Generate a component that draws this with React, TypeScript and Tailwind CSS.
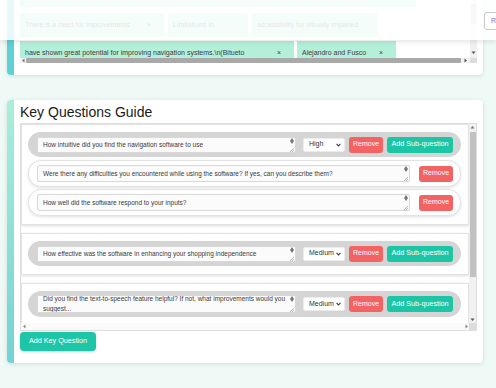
import React from 'react';

type Dir = 'up' | 'down' | 'left' | 'right';

function Tri({ d, c = '#6f6f6f' }: { d: Dir; c?: string }) {
  const pts = {
    up: '0.5,3.5 2.5,1 4.5,3.5',
    down: '0.5,1.5 2.5,4 4.5,1.5',
    left: '3.5,0.5 1,2.5 3.5,4.5',
    right: '1.5,0.5 4,2.5 1.5,4.5',
  }[d];
  return (
    <svg width="5" height="5" viewBox="0 0 5 5" className="shrink-0">
      <polygon points={pts} fill={c} />
    </svg>
  );
}

// fake textarea with its little spinner + resize grip
function Field({ children, className = '' }: { children: React.ReactNode; className?: string }) {
  return (
    <div className={`flex shrink-0 rounded-[2px] border border-[#d8d8d8] bg-[#fbfbfb] ${className}`}>
      <div className="flex-1 overflow-hidden pl-[5px] text-[6.5px] leading-[10px] text-[#3a3a3a]">{children}</div>
      <div className="flex w-[7px] flex-col items-center justify-between">
        <div className="flex flex-col items-center leading-none">
          <svg width="4" height="3" viewBox="0 0 4 3"><polygon points="0,3 2,0 4,3" fill="#777" /></svg>
          <svg width="4" height="3" viewBox="0 0 4 3"><polygon points="0,0 2,3 4,0" fill="#777" /></svg>
        </div>
        <svg width="5" height="5" viewBox="0 0 5 5">
          <path d="M1 5 L5 1 M3 5 L5 3" stroke="#9a9a9a" strokeWidth="0.7" />
        </svg>
      </div>
    </div>
  );
}

function Select({ value }: { value: string }) {
  return (
    <div className="ml-[7px] flex h-[14px] w-[42px] shrink-0 items-center justify-between rounded-[2px] border border-[#ececec] bg-white pl-[5px] pr-[3px] text-[7px] text-[#333]">
      <span>{value}</span>
      <svg width="5" height="4" viewBox="0 0 5 4"><path d="M0.6 0.8 L2.5 3 L4.4 0.8" stroke="#333" strokeWidth="1.1" fill="none" /></svg>
    </div>
  );
}

function RemoveBtn({ className = '' }: { className?: string }) {
  return (
    <button className={`flex h-[16px] w-[34px] shrink-0 items-center justify-center rounded-[3px] bg-[#f36363] text-[7px] text-white ${className}`}>
      Remove
    </button>
  );
}

function AddSubBtn() {
  return (
    <button className="ml-[4px] flex h-[16px] w-[66px] shrink-0 items-center justify-center rounded-[3px] bg-[#1cc5a6] text-[7.2px] text-white">
      Add Sub-question
    </button>
  );
}

function MainRow({ priority, h = 25, fieldH = 16, children }: { priority: string; h?: number; fieldH?: number; children: React.ReactNode }) {
  return (
    <div
      className="flex items-center rounded-[13px] bg-[#d5d5d5] pl-[9px] pr-[8px]"
      style={{ height: h }}
    >
      <Field className="w-[259px]">
        <div style={{ height: fieldH - 2 }} className="flex flex-col justify-center">{children}</div>
      </Field>
      <Select value={priority} />
      <RemoveBtn className="ml-[4px]" />
      <AddSubBtn />
    </div>
  );
}

function SubRow({ text }: { text: string }) {
  return (
    <div className="flex h-[27px] items-center rounded-[13px] border border-[#e3e3e3] bg-white pl-[8px] pr-[7px] shadow-[0_1px_3px_rgba(0,0,0,0.12)]">
      <Field className="w-[373px]">
        <div className="flex h-[15px] items-center whitespace-nowrap">{text}</div>
      </Field>
      <RemoveBtn className="ml-[9px]" />
    </div>
  );
}

function Group({ children }: { children: React.ReactNode }) {
  return (
    <div className="shrink-0 border border-[#e2e2e2] bg-white pb-[8px] pl-[6px] pr-[7px] pt-[7px] shadow-[0_1px_3px_rgba(0,0,0,0.14)]">
      {children}
    </div>
  );
}

function Chip({ w, text, x = true }: { w: number; text: string; x?: boolean }) {
  return (
    <div
      className="flex h-[24px] shrink-0 items-center whitespace-nowrap bg-[#b4efda] pl-[5px] pr-[13px] text-[7px] text-[#3d3d3d]"
      style={{ width: w }}
    >
      <span>{text}</span>
      {x && <span className="ml-auto pl-[4px] text-[7px]">×</span>}
    </div>
  );
}

export default function App() {
  return (
    <div className="relative h-[388px] w-full overflow-hidden bg-[#effaf6] font-[Liberation_Sans,Arial,sans-serif]">
      {/* sticky top toolbar over the page */}
      <div className="absolute inset-x-0 top-0 z-10 h-[40px] bg-white/[0.86] shadow-[0_2px_5px_rgba(0,0,0,0.10)]">
        <button className="absolute left-[484px] top-[12px] h-[18px] whitespace-nowrap rounded-[3px] border border-[#c8c8c8] bg-white px-[6px] text-[7px] text-[#8a6cc8]">
          R
        </button>
      </div>

      <div className="ml-[7px] flex w-[476px] flex-col gap-[25px]">
        {/* references card (scrolled, mostly under toolbar) */}
        <div className="flex h-[75px] rounded-b-[4px] bg-white shadow-[0_1px_4px_rgba(0,0,0,0.12)]">
          <div className="w-[7px] rounded-bl-[4px] bg-[#5fd0d4]" />
          <div className="flex flex-1 flex-col px-[6px] pb-[12px]">
            <div className="flex h-[58px]">
              <div className="flex-1 overflow-hidden">
                <div className="-mt-[17px] flex flex-col">
                  <div className="flex h-[24px] shrink-0">
                    <div className="h-[24px] w-[396px] bg-[#b8f0dc]" />
                  </div>
                  <div className="mt-[6px] flex gap-[4px]">
                    <Chip w={144} text="There is a need for improvements" />
                    <Chip w={80} text="Limitations in" x={false} />
                    <Chip w={126} text="accessibility for visually impaired" x={false} />
                  </div>
                  <div className="mt-[4px] flex gap-[3px]">
                    <Chip w={274} text="have shown great potential for improving navigation systems.\n(Bitueto" />
                    <Chip w={99} text="Alejandro and Fusco" />
                  </div>
                </div>
              </div>
              <div className="flex w-[7px] flex-col items-center justify-between bg-[#f1f1f1] pb-[3px]">
                <div className="mt-[4px] h-[20px] w-[5px] rounded-[1px] bg-[#c3c3c3]" />
                <Tri d="down" c="#555" />
              </div>
            </div>
            <div className="flex h-[5px] items-center bg-[#f1f1f1]">
              <div className="flex w-[6px] justify-center"><Tri d="left" c="#777" /></div>
              <div className="h-[5px] w-[435px] rounded-[1px] bg-[#a9a9a9]" />
              <div className="flex flex-1 justify-center"><Tri d="right" c="#555" /></div>
              <div className="h-[5px] w-[7px] bg-[#dcdcdc]" />
            </div>
          </div>
        </div>

        {/* Key Questions Guide */}
        <div className="flex h-[263px] rounded-[4px] bg-white shadow-[0_1px_5px_rgba(0,0,0,0.12)]">
          <div className="w-[7px] rounded-l-[4px] bg-gradient-to-b from-[#a9eeda] to-[#72d3d3]" />
          <div className="flex flex-1 flex-col px-[6px] pb-[12px] pt-[4px]">
            <h2 className="h-[16px] text-[14px] leading-[16px] text-[#1a1a1a]">Key Questions Guide</h2>
            <div className="mt-[3px] flex h-[208px] flex-col border border-[#dedede]">
              <div className="flex min-h-0 flex-1">
                <div className="flex flex-1 flex-col gap-[8px] overflow-hidden">
                  <Group>
                    <MainRow priority="High">
                      <span className="whitespace-nowrap">How intuitive did you find the navigation software to use</span>
                    </MainRow>
                    <div className="mt-[3px]">
                      <SubRow text="Were there any difficulties you encountered while using the software? If yes, can you describe them?" />
                    </div>
                    <div className="mt-[2px]">
                      <SubRow text="How well did the software respond to your inputs?" />
                    </div>
                  </Group>
                  <Group>
                    <MainRow priority="Medium">
                      <span className="whitespace-nowrap">How effective was the software in enhancing your shopping independence</span>
                    </MainRow>
                  </Group>
                  <Group>
                    <MainRow priority="Medium" h={26} fieldH={18}>
                      <div className="-mt-[1px] whitespace-nowrap leading-[10px]">
                        Did you find the text-to-speech feature helpful? If not, what improvements would you
                        <br />
                        suggest...
                      </div>
                    </MainRow>
                  </Group>
                </div>
                <div className="flex w-[7px] flex-col items-center bg-[#f1f1f1] py-[1px]">
                  <Tri d="up" c="#777" />
                  <div className="mt-[2px] h-[145px] w-[6px] bg-[#c1c1c1]" />
                  <div className="flex-1" />
                  <Tri d="down" c="#555" />
                </div>
              </div>
              <div className="flex h-[7px] items-center bg-[#fafafa]">
                <div className="flex w-[6px] justify-center"><Tri d="left" c="#888" /></div>
                <div className="flex-1" />
                <div className="flex w-[6px] justify-center"><Tri d="right" c="#888" /></div>
                <div className="h-[7px] w-[7px] bg-[#dcdcdc]" />
              </div>
            </div>
            <button className="mt-[1px] flex h-[19px] w-[76px] items-center justify-center rounded-[4px] bg-[#1dc6a7] text-[7.2px] text-white shadow-[0_1px_3px_rgba(0,0,0,0.18)]">
              Add Key Question
            </button>
          </div>
        </div>
      </div>
    </div>
  );
}
